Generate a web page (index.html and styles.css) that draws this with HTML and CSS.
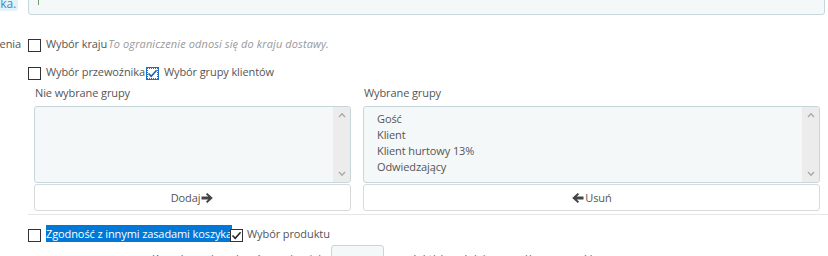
FILE: index.html
```html
<!DOCTYPE html>
<html lang="pl">
<head>
  <meta charset="UTF-8">
  <meta name="viewport" content="width=device-width, initial-scale=1.0">
  <title>Reguły koszyka - warunki</title>
  <link rel="stylesheet" href="styles.css">
</head>
<body>
  <div class="form">
    <div class="row row-top">
      <div class="lbl lbl-top"><span class="tip">ka.</span></div>
      <div class="field field-top"><div class="text-input"><span class="caret"></span></div></div>
    </div>

    <div class="row row-kraj">
      <div class="lbl">enia</div>
      <div class="field">
        <span class="cb"></span><span class="txt">Wybór kraju</span><span class="help">To ograniczenie odnosi się do kraju dostawy.</span>
      </div>
    </div>

    <div class="row row-grupy">
      <div class="lbl"></div>
      <div class="field">
        <span class="cb"></span><span class="txt">Wybór przewoźnika</span>
        <span class="cb cb-after cb-focus"><svg width="11" height="11" viewBox="0 0 11 11"><polyline points="1.5,5.5 4.2,8.3 9.6,2.3" fill="none" stroke="#1d5ea8" stroke-width="1.5"/></svg></span>
        <span class="txt">Wybór grupy klientów</span>
      </div>
    </div>

    <div class="groups">
      <div class="col">
        <div class="col-title">Nie wybrane grupy</div>
        <div class="listbox">
          <div class="opts"></div>
          <div class="sbar">
            <svg width="8" height="6" viewBox="0 0 8 6"><polyline points="1,5 4,1.8 7,5" fill="none" stroke="#a9a9a9" stroke-width="1.3"/></svg>
            <svg width="8" height="6" viewBox="0 0 8 6"><polyline points="1,1 4,4.2 7,1" fill="none" stroke="#a9a9a9" stroke-width="1.3"/></svg>
          </div>
        </div>
        <button class="btn" type="button">Dodaj<svg width="13" height="10" viewBox="0 0 13 10"><path d="M0.5 3.4H7.2L4.9 1.3L6.3 0L11.8 5L6.3 10L4.9 8.7L7.2 6.6H0.5Z" fill="#444"/></svg></button>
      </div>
      <div class="col">
        <div class="col-title">Wybrane grupy</div>
        <div class="listbox">
          <div class="opts">
            <div>Gość</div>
            <div>Klient</div>
            <div>Klient hurtowy 13%</div>
            <div>Odwiedzający</div>
          </div>
          <div class="sbar">
            <svg width="8" height="6" viewBox="0 0 8 6"><polyline points="1,5 4,1.8 7,5" fill="none" stroke="#a9a9a9" stroke-width="1.3"/></svg>
            <svg width="8" height="6" viewBox="0 0 8 6"><polyline points="1,1 4,4.2 7,1" fill="none" stroke="#a9a9a9" stroke-width="1.3"/></svg>
          </div>
        </div>
        <button class="btn" type="button"><svg width="13" height="10" viewBox="0 0 13 10"><path d="M12.5 3.4H5.8L8.1 1.3L6.7 0L1.2 5L6.7 10L8.1 8.7L5.8 6.6H12.5Z" fill="#444"/></svg>Usuń</button>
      </div>
    </div>

    <hr class="sep">

    <div class="row row-zgod">
      <div class="lbl"></div>
      <div class="field">
        <span class="cb"></span><span class="txt sel">Zgodność z innymi zasadami koszyka</span>
        <span class="cb cb-after cb-tight"><svg width="11" height="11" viewBox="0 0 11 11"><polyline points="1.5,5.5 4.2,8.3 9.6,2.3" fill="none" stroke="#222" stroke-width="1.5"/></svg></span>
        <span class="txt txt-tight">Wybór produktu</span>
      </div>
    </div>

    <div class="row row-ilosc">
      <div class="qty-label">Koszyk musi zawierać co najmniej</div>
      <div class="qty-input">1</div>
      <div class="qty-after">produkt(y) spełniające poniższe warunki.</div>
    </div>
  </div>
</body>
</html>
```

FILE: styles.css
```css
body{margin:0;font-family:"Open Sans",sans-serif;font-size:11px;letter-spacing:-0.1px;color:#555;background:#fff;overflow:hidden;}
.form{width:828px;}
.row{display:flex;line-height:18px;}
.lbl{width:28px;flex:none;display:flex;justify-content:flex-end;padding-right:7px;box-sizing:border-box;overflow:hidden;white-space:nowrap;}
.field{display:flex;align-items:flex-start;white-space:nowrap;}

.row-top{height:15px;}
.lbl-top{padding-right:10px;align-items:flex-start;overflow:visible;}
.tip{display:block;height:14px;line-height:14px;margin-top:-3px;padding:0 2px 0 1px;background:#e3f1f9;color:#3a8cc4;border-radius:0 0 3px 0;font-size:12px;}
.field-top{flex:1;}
.text-input{flex:1;height:31px;margin:-16px 3px 0 0;border:1px solid #c7d6db;border-radius:3px;background:#f5f8f9;box-sizing:border-box;padding-left:9px;}
.caret{display:block;width:1px;height:14px;margin-top:6px;background:#6f9a6f;}

.row-kraj{margin-top:20px;}
.row-grupy{margin-top:10px;}

.cb{width:13px;height:13px;border:1px solid #333;box-sizing:border-box;margin-top:4px;background:#fff;flex:none;display:flex;align-items:center;justify-content:center;}
.cb-after{margin-left:1px;}
.cb-focus{border-color:#1a6fd0;outline:1px dotted #1a6fd0;outline-offset:-2px;}
.txt{margin-left:5px;}
.help{margin-left:1px;font-style:italic;color:#999;letter-spacing:0.1px;}

.groups{display:grid;grid-template-columns:317px 457px;column-gap:12px;margin:3px 0 0 34px;}
.col-title{line-height:17px;padding-left:1px;}
.listbox{display:flex;height:77px;margin-top:5px;border:1px solid #c7d6db;border-radius:3px;background:#f5f8f9;box-sizing:border-box;overflow:hidden;}
.opts{flex:1;padding:4px 0 0 13px;line-height:16px;}
.sbar{width:17px;flex:none;background:#ececec;display:flex;flex-direction:column;justify-content:space-between;align-items:center;padding:5px 0;box-sizing:border-box;}
.sbar svg{display:block;}
.btn{display:flex;align-items:center;justify-content:center;gap:1px;width:100%;height:27px;margin-top:1px;padding:0;border:1px solid #d6dadd;border-radius:3px;background:#fff;font:inherit;letter-spacing:inherit;color:#555;}
.btn svg{display:block;}

.sep{margin:3px 0 0 28px;border:0;border-top:1px solid #e6e6e6;height:0;}

.row-zgod{margin-top:10px;line-height:17px;}
.sel{background:#0078d7;color:#fff;}
.cb-tight{margin-left:-2px;}
.txt-tight{margin-left:4px;}

.row-ilosc{margin-top:3px;line-height:24px;}
.qty-label{width:293px;margin-left:28px;text-align:right;padding-top:2px;}
.qty-input{width:53px;height:30px;margin-left:10px;border:1px solid #c7d6db;border-radius:3px;background:#f5f8f9;box-sizing:border-box;padding:2px 0 0 8px;line-height:24px;}
.qty-after{margin-left:8px;padding-top:2px;}
```
